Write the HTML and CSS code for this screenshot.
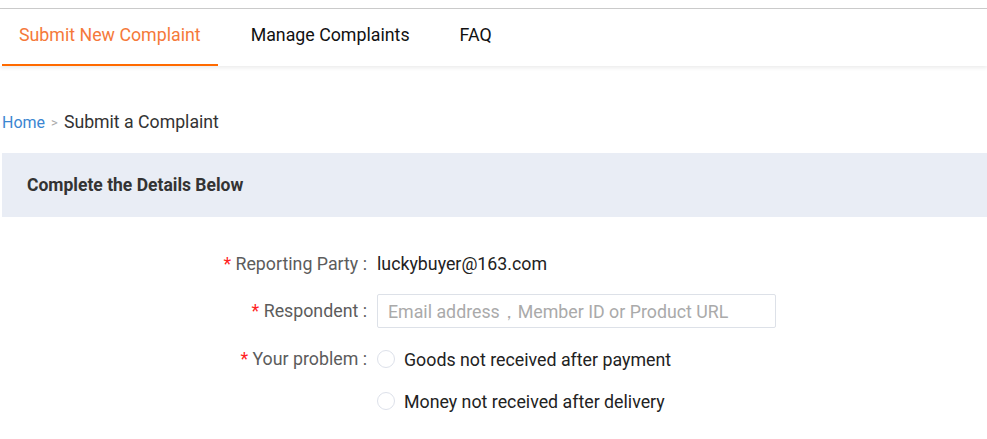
FILE: index.html
```html
<!DOCTYPE html>
<html>
  <head>
    <title>Submit a Complaint</title>
    <meta name="viewport" content="width=device-width, initial-scale=1.0">
    <link rel="stylesheet" href="styles.css">
  </head>
  <body>
    <div class="top-line"></div>

    <nav class="tabs">
      <a class="tab active" href="#">Submit New Complaint</a>
      <a class="tab" href="#">Manage Complaints</a>
      <a class="tab" href="#">FAQ</a>
    </nav>

    <div class="page">
      <div class="breadcrumb">
        <a href="#">Home</a>
        <span class="sep">&gt;</span>
        <span class="current">Submit a Complaint</span>
      </div>

      <div class="panel-head">Complete the Details Below</div>

      <form class="complaint-form">
        <div class="row">
          <label class="field-label"><span class="req">*</span> Reporting Party :</label>
          <div class="field-value">luckybuyer@163.com</div>
        </div>
        <div class="row">
          <label class="field-label" for="respondent"><span class="req">*</span> Respondent :</label>
          <input class="text-input" id="respondent" type="text" placeholder="Email address，Member ID or Product URL">
        </div>
        <div class="row">
          <label class="field-label"><span class="req">*</span> Your problem :</label>
          <div class="options">
            <label class="radio"><input type="radio" name="problem"><span class="dot"></span>Goods not received after payment</label>
            <label class="radio"><input type="radio" name="problem"><span class="dot"></span>Money not received after delivery</label>
          </div>
        </div>
      </form>
    </div>
  </body>
</html>
```

FILE: styles.css
```css
/* page */
body {
  font-family: Roboto, "Liberation Sans", Arial, sans-serif;
  margin: 0;
  padding: 8px 0 0;
  background-color: #fff;
  color: #333;
}

.top-line {
  height: 1px;
  background-color: #ccc;
}

/* tabs */
.tabs {
  display: flex;
  height: 57px;
  padding-left: 2px;
  background-color: #fff;
  box-shadow: 0 2px 4px rgba(0, 0, 0, 0.08);
}

.tab {
  display: flex;
  align-items: center;
  padding: 0 17px 4px;
  margin-right: 16px;
  font-size: 17.8px;
  color: #111;
  text-decoration: none;
  border-bottom: 2px solid transparent;
}

.tab.active {
  color: #f5793a;
  border-bottom-color: #ff6a00;
}

.page {
  padding: 0 0 0 2px;
}

.breadcrumb {
  margin-top: 45px;
  height: 22px;
  display: flex;
  align-items: center;
}

.breadcrumb a {
  color: #3b86d1;
  text-decoration: none;
  font-size: 16px;
}

.breadcrumb .sep {
  color: #aaa;
  font-size: 13px;
  margin: 0 6px 0 6px;
}

.breadcrumb .current {
  font-size: 17.7px;
  color: #333;
}

.panel-head {
  margin-top: 20px;
  height: 64px;
  display: flex;
  align-items: center;
  padding-left: 25px;
  background-color: #e9edf5;
  font-size: 17.5px;
  font-weight: bold;
  color: #333;
}

/* form */
.complaint-form {
  padding-top: 31px;
}

.row {
  display: flex;
  align-items: flex-start;
  margin-bottom: 15px;
}

.field-label {
  width: 365px;
  flex-shrink: 0;
  text-align: right;
  padding-right: 10px;
  line-height: 32px;
  font-size: 17.8px;
  color: #5c5c5c;
}

.req {
  color: #f22;
}

.field-value {
  line-height: 32px;
  font-size: 17.8px;
  color: #222;
}

.text-input {
  width: 399px;
  height: 34px;
  box-sizing: border-box;
  border: 1px solid #dde1e8;
  border-radius: 2px;
  padding: 0 10px;
  font-family: inherit;
  font-size: 17.8px;
  color: #333;
  margin-top: -1px;
}

.text-input::placeholder {
  color: #aaa;
}

.options {
  display: flex;
  flex-direction: column;
  gap: 10px;
}

.radio {
  display: flex;
  align-items: center;
  height: 32px;
  font-size: 17.8px;
  color: #222;
  cursor: pointer;
}

.radio input {
  display: none;
}

.radio .dot {
  width: 16px;
  height: 16px;
  border: 1px solid #dde1ea;
  border-radius: 50%;
  margin-right: 9px;
}
```
